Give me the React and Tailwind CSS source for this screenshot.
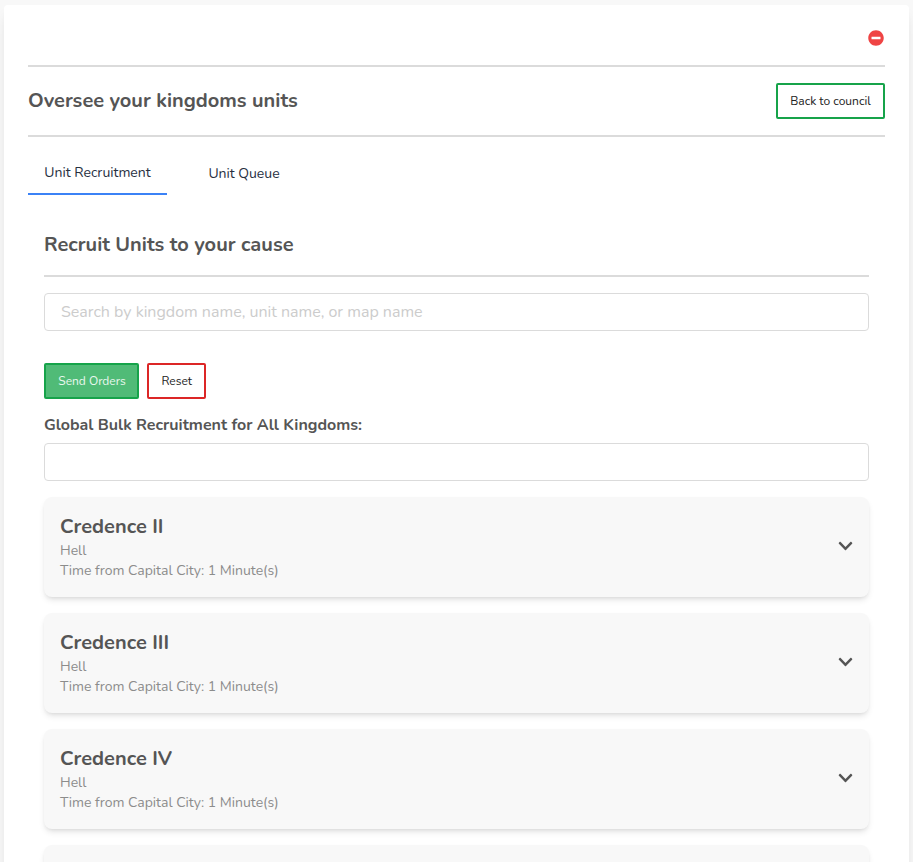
import React from "react";
import { FaChevronDown, FaMinusCircle } from "react-icons/fa";

const kingdoms = ["Credence II", "Credence III", "Credence IV"];

function Divider() {
  return <div className="h-0.5 bg-[#dbdbdb]" />;
}

function KingdomCard({ name }) {
  return (
    <div className="flex h-[100px] shrink-0 items-center justify-between rounded-lg bg-[#f8f8f8] p-4 shadow-md">
      <div>
        <h2 className="text-xl font-bold leading-7 text-[#555555]">
          <span>{name}</span>
        </h2>
        <p className="text-sm leading-5 text-[#8c8c8c]"><span>Hell</span></p>
        <p className="text-sm leading-5 text-[#8c8c8c]">
          <span>Time from Capital City: 1 Minute(s)</span>
        </p>
      </div>
      <FaChevronDown className="mb-[2.6px] h-4 w-[15px] text-[#555555]" />
    </div>
  );
}

export default function App() {
  return (
    <div className="h-screen overflow-hidden bg-[#f8f8f8] px-1 pt-[5px] font-['Nunito',sans-serif] text-[#555555]">
      <main className="h-[1200px] rounded-sm bg-white px-6 shadow-lg">
        <div className="flex h-[60px] items-center justify-end pt-[6.5px]">
          <button className="mr-[0.7px] text-[#ef4444]" aria-label="Close">
            <FaMinusCircle className="h-4 w-4" />
          </button>
        </div>
        <Divider />
        <div className="flex h-[68px] items-center justify-between">
          <h1 className="text-xl font-bold"><span>Oversee your kingdoms units</span></h1>
          <button className="h-9 w-[109px] rounded-xs border-2 border-[#16a34a] text-xs text-[#222222]">
            Back to council
          </button>
        </div>
        <Divider />
        <div className="flex h-[58px] items-end text-sm text-[#27303f]">
          <button className="h-[45px] w-[139px] border-b-2 border-[#3b82f6] pt-0.5">Unit Recruitment</button>
          <button className="ml-6 h-[43px] w-[106px]">Unit Queue</button>
        </div>
        <section className="px-4">
          <div className="flex h-20 items-center pt-5">
            <h2 className="text-xl font-bold"><span>Recruit Units to your cause</span></h2>
          </div>
          <Divider />
          <input
            className="mt-4 block h-[38px] w-full rounded-sm border border-[#dbdbdb] px-4 text-base placeholder:text-[#cccccc]"
            placeholder="Search by kingdom name, unit name, or map name"
          />
          <div className="mt-8 flex gap-2 text-xs">
            <button className="h-9 w-[95px] rounded-xs border-2 border-[#16a34a] bg-[#50bb77] pl-px text-[#eaf8ef]">
              Send Orders
            </button>
            <button className="h-9 w-[59px] rounded-xs border-2 border-[#dc2626] pl-[0.4px] text-[#222222]">Reset</button>
          </div>
          <label className="mt-3.5 block h-[30px] text-base font-bold leading-6">
            <span>Global Bulk Recruitment for All Kingdoms:</span>
          </label>
          <input className="block h-[38px] w-full rounded-sm border border-[#dbdbdb] px-4" aria-label="Bulk amount" />
          <div className="mt-4 flex flex-col gap-4">
            {kingdoms.map((name) => (
              <KingdomCard key={name} name={name} />
            ))}
            <div className="h-[100px] shrink-0 rounded-lg bg-[#f8f8f8] shadow-md" />
          </div>
        </section>
      </main>
    </div>
  );
}
